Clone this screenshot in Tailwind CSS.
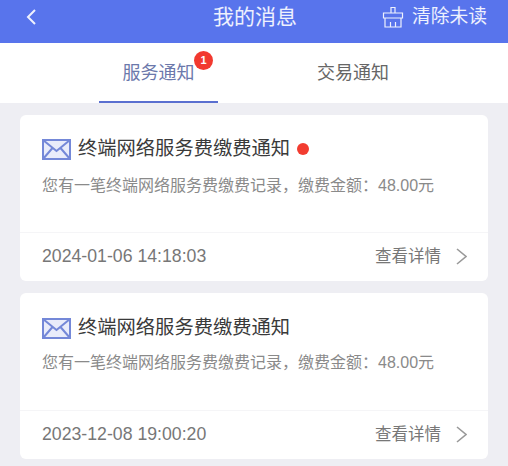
<!DOCTYPE html>
<html lang="zh-CN">
<head>
    <meta charset="UTF-8">
    <meta name="viewport" content="width=device-width, initial-scale=1.0">
    <title>我的消息</title>
    <script src="https://cdn.jsdelivr.net/npm/@tailwindcss/browser@4"></script>
</head>
<body class="bg-[#eeeef3] h-[466px] w-[508px] overflow-hidden font-['Liberation_Sans','Noto_Sans_CJK_SC',sans-serif]">
    <!-- 顶部栏 -->
    <header class="h-[43px] bg-[#5874ec] text-white/90 flex items-center pl-[25px] pr-[21px]">
        <svg class="w-[12px] h-[18px] mb-[9px]" viewBox="0 0 12 18" fill="none" stroke="currentColor" stroke-width="2"><path d="M10 2 L3 9 L10 16"/></svg>
        <div class="text-[21px] ml-[176px] mb-[9px]">我的消息</div>
        <div class="flex items-center gap-[8px] mb-[9px] ml-auto">
            <svg class="w-[22px] h-[22px]" viewBox="0 0 22 22" fill="none" stroke="currentColor" stroke-width="1.2"><path d="M9 7V1.500h4V7M1.500 7h19v5h-19zM3 12v9h16v-9M8.500 21v-5M13.500 21v-5"/></svg>
            <div class="text-[18.750px]">清除未读</div>
        </div>
    </header>

    <!-- 标签 -->
    <nav class="h-[60px] bg-white flex">
        <div class="relative w-[119px] ml-[99px] h-full border-b-[2px] border-[#5a6fd0] flex justify-center pt-[17px]">
            <span class="text-[18px] leading-[26px] text-[#6b78ab]">服务通知</span>
            <span class="absolute left-[95px] top-[8px] w-[19px] h-[19px] rounded-full bg-[#f2392f] text-white text-[11px] font-bold flex items-center justify-center">1</span>
        </div>
        <div class="ml-[99px] pt-[17px] text-[18px] leading-[26px] text-[#666]">交易通知</div>
    </nav>

    <main class="flex flex-col gap-[12px] px-[20px] pt-[12px]">
        <!-- 卡片1 -->
        <section class="h-[166px] bg-white rounded-[6px] flex flex-col">
            <div class="h-[118px] border-b border-[#f5f5f7] pl-[22px] pt-[21px]">
                <div class="flex items-center h-[26px]">
                    <svg class="w-[29px] h-[21px] shrink-0" viewBox="0 0 29 21" fill="#e9ecfa" stroke="#7488d8" stroke-width="2"><rect x="1" y="1" width="27" height="19"/><path d="M1 1 L14.500 12 L28 1 M1 20 L10.500 9 M28 20 L18.500 9" fill="none"/></svg>
                    <span class="ml-[7px] text-[19.3px] text-[#3a3a3a]">终端网络服务费缴费通知</span>
                    <span class="ml-[7px] w-[12px] h-[12px] rounded-full bg-[#f23c30]"></span>
                </div>
                <p class="mt-[13px] text-[16px] leading-[22px] text-[#8a8a8a]">您有一笔终端网络服务费缴费记录，缴费金额：48.00元</p>
            </div>
            <div class="flex-1 flex items-center justify-between pl-[22px] pr-[21px] pb-[2px] text-[#777]">
                <span class="text-[17.700px]">2024-01-06 14:18:03</span>
                <div class="flex items-center gap-[15px]">
                    <span class="text-[16.500px]">查看详情</span>
                    <svg class="w-[11px] h-[17px] text-[#999]" viewBox="0 0 11 17" fill="none" stroke="currentColor" stroke-width="1.6"><path d="M1 1 L10 8.500 L1 16"/></svg>
                </div>
            </div>
        </section>

        <!-- 卡片2 -->
        <section class="h-[166px] bg-white rounded-[6px] flex flex-col">
            <div class="h-[118px] border-b border-[#f5f5f7] pl-[22px] pt-[22px]">
                <div class="flex items-center h-[26px]">
                    <svg class="w-[29px] h-[21px] shrink-0" viewBox="0 0 29 21" fill="#e9ecfa" stroke="#7488d8" stroke-width="2"><rect x="1" y="1" width="27" height="19"/><path d="M1 1 L14.500 12 L28 1 M1 20 L10.500 9 M28 20 L18.500 9" fill="none"/></svg>
                    <span class="ml-[7px] text-[19.3px] text-[#3a3a3a]">终端网络服务费缴费通知</span>
                </div>
                <p class="mt-[11px] text-[16px] leading-[22px] text-[#8a8a8a]">您有一笔终端网络服务费缴费记录，缴费金额：48.00元</p>
            </div>
            <div class="flex-1 flex items-center justify-between pl-[22px] pr-[21px] pb-[2px] text-[#777]">
                <span class="text-[17.700px]">2023-12-08 19:00:20</span>
                <div class="flex items-center gap-[15px]">
                    <span class="text-[16.500px]">查看详情</span>
                    <svg class="w-[11px] h-[17px] text-[#999]" viewBox="0 0 11 17" fill="none" stroke="currentColor" stroke-width="1.6"><path d="M1 1 L10 8.500 L1 16"/></svg>
                </div>
            </div>
        </section>
    </main>
</body>
</html>
